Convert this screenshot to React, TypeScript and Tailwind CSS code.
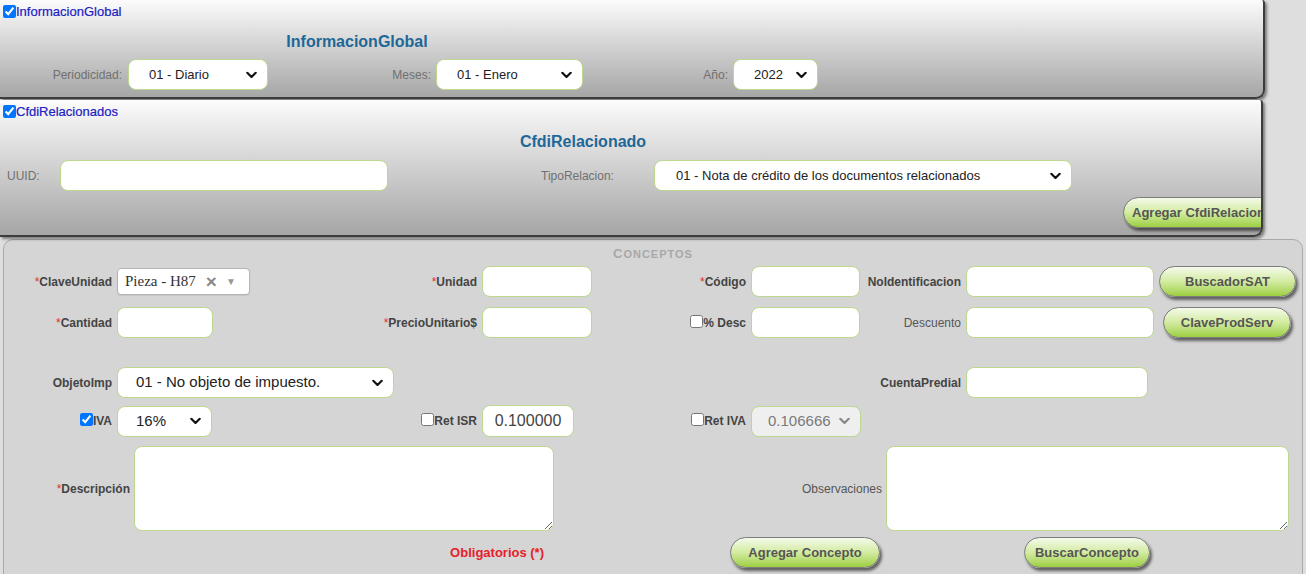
import React from "react";

const LBL = "text-[12px] font-bold text-[#444] whitespace-nowrap";
const INP =
  "h-[31px] rounded-[8px] border border-[#bcd88f] bg-white px-2 text-[15px] text-[#333] outline-none";
const BTN =
  "h-[31px] shrink-0 rounded-full border border-[#7c7c7c] bg-linear-to-b from-[#f4faea] via-[#d3eba0] to-[#9dcf3c] text-[13px] font-bold text-[#555] whitespace-nowrap shadow-[2px_3px_3px_rgba(0,0,0,0.55)]";
const PANEL =
  "relative bg-linear-to-b from-[#fcfcfc] to-[#a6a6a6] border-r-2 border-b-2 border-[#3c3c3c] rounded-br-[9px] rounded-tr-[3px] shadow-[2px_2px_3px_rgba(0,0,0,0.45)]";

function Chevron({ className }: { className?: string }) {
  return (
    <svg width="11" height="7" viewBox="0 0 11 7" className={className}>
      <path
        d="M1.3 1.3 L5.5 5.5 L9.7 1.3"
        fill="none"
        stroke="currentColor"
        strokeWidth="2.2"
        strokeLinecap="round"
        strokeLinejoin="round"
      />
    </svg>
  );
}

function Select({
  w,
  text,
  size = "text-[13px]",
  disabled,
  pad = "pl-[20px]",
}: {
  w: string;
  text: string;
  size?: string;
  disabled?: boolean;
  pad?: string;
}) {
  return (
    <div className={`relative shrink-0 ${w}`}>
      <select
        disabled={disabled}
        defaultValue={text}
        className={`h-[31px] w-full appearance-none rounded-[8px] border border-[#bcd88f] ${pad} ${size} outline-none ${
          disabled ? "bg-[#efefef] text-[#7a7a7a]" : "bg-white text-[#222]"
        }`}
      >
        <option>{text}</option>
      </select>
      <Chevron
        className={`pointer-events-none absolute right-[11px] top-1/2 -translate-y-1/2 ${
          disabled ? "text-[#888]" : "text-[#111]"
        }`}
      />
    </div>
  );
}

function Label({
  w,
  req,
  check,
  checked,
  normal,
  pr = "pr-[5px]",
  children,
}: {
  w: string;
  req?: boolean;
  check?: boolean;
  checked?: boolean;
  normal?: boolean;
  pr?: string;
  children: React.ReactNode;
}) {
  return (
    <div className={`flex shrink-0 items-center justify-end ${w} ${pr}`}>
      {check && (
        <input
          type="checkbox"
          defaultChecked={checked}
          className="m-0 mb-[3px] h-[13px] w-[13px]"
        />
      )}
      <span className={normal ? "text-[12px] text-[#555] whitespace-nowrap" : LBL}>
        {req && <span className="font-normal text-[#e0302a]">*</span>}
        {children}
      </span>
    </div>
  );
}

function Header({ children }: { children: React.ReactNode }) {
  return (
    <div className="flex h-[18px] items-center pl-[3px] pt-[5px]">
      <input type="checkbox" defaultChecked className="m-0 h-[13px] w-[13px]" />
      <span className="text-[13px] leading-none text-[#2020c4] [-webkit-text-stroke:0.2px_#2020c4]">
        {children}
      </span>
    </div>
  );
}

export default function App() {
  return (
    <div className="h-[574px] w-[1306px] overflow-hidden bg-[#dedede] font-['Liberation_Sans',Arial,sans-serif]">
      {/* InformacionGlobal */}
      <section className={`${PANEL} h-[99px] w-[1265px]`}>
        <Header>InformacionGlobal</Header>
        <h2 className="mt-[14px] w-[714px] text-center text-[16px] font-bold leading-[20px] text-[#1d6898]">
          InformacionGlobal
        </h2>
        <div className="mt-[7px] flex h-[31px] items-center">
          <div className="w-[128px] shrink-0 pr-[6px] text-right text-[12px] text-[#707070]">
            Periodicidad:
          </div>
          <Select w="w-[140px]" text="01 - Diario" />
          <div className="w-[168px] shrink-0 pr-[5px] text-right text-[12px] text-[#707070]">
            Meses:
          </div>
          <Select w="w-[147px]" text="01 - Enero" />
          <div className="w-[150px] shrink-0 pr-[5px] text-right text-[12px] text-[#707070]">
            Año:
          </div>
          <Select w="w-[85px]" text="2022" />
        </div>
      </section>

      {/* CfdiRelacionados */}
      <section className={`${PANEL} mt-[1px] h-[137px] w-[1263px] overflow-hidden`}>
        <Header>CfdiRelacionados</Header>
        <h2 className="mt-[14px] w-[1166px] text-center text-[16px] font-bold leading-[20px] text-[#1d6898]">
          CfdiRelacionado
        </h2>
        <div className="mt-[8px] flex h-[31px] items-center">
          <div className="w-[60px] shrink-0 pl-[7px] text-[12px] text-[#707070]">UUID:</div>
          <input className={`${INP} w-[328px]`} />
          <div className="w-[266px] shrink-0 pl-[153px] text-[12px] text-[#707070]">
            TipoRelacion:
          </div>
          <Select
            w="w-[418px]"
            text="01 - Nota de crédito de los documentos relacionados"
            pad="pl-[21px]"
          />
        </div>
        <div className="mt-[6px] flex">
          <button className={`${BTN} ml-[1123px] w-[190px] pl-[8px] text-left`}>
            Agregar CfdiRelacionados
          </button>
        </div>
      </section>

      {/* Conceptos */}
      <section className="ml-[3px] mt-[2px] h-[360px] w-[1300px] rounded-t-[10px] border border-[#a9a9a9] bg-[#d5d5d5]">
        <div className="pt-[7px] text-center text-[13px] font-bold leading-[14px] tracking-[1px] text-[#a8a8a8]">
          <span>C</span>
          <span className="text-[11px]">ONCEPTOS</span>
        </div>

        {/* row 1 */}
        <div className="mt-[5px] flex h-[31px] items-center">
          <Label w="w-[113px]" req>
            ClaveUnidad
          </Label>
          <div className="flex h-[27px] w-[133px] shrink-0 items-center rounded-[4px] border border-[#b4b4b4] bg-white pl-[7px] shadow-[0_1px_1px_rgba(0,0,0,0.08)]">
            <span className="font-['Liberation_Serif',serif] text-[15px] text-[#333]">
              Pieza - H87
            </span>
            <span className="ml-[10px] text-[19px] font-bold leading-none text-[#8a8a8a]">×</span>
            <span className="ml-[9px] text-[10px] leading-none text-[#999]">▼</span>
          </div>
          <Label w="w-[232px]" req>
            Unidad
          </Label>
          <input className={`${INP} w-[110px]`} />
          <Label w="w-[159px]" req>
            Código
          </Label>
          <input className={`${INP} w-[109px]`} />
          <Label w="w-[106px]">NoIdentificacion</Label>
          <input className={`${INP} w-[188px]`} />
          <button className={`${BTN} ml-[5px] w-[137px]`}>BuscadorSAT</button>
        </div>

        {/* row 2 */}
        <div className="mt-[10px] flex h-[31px] items-center">
          <Label w="w-[113px]" req>
            Cantidad
          </Label>
          <input className={`${INP} w-[96px]`} />
          <Label w="w-[269px]" req>
            PrecioUnitario$
          </Label>
          <input className={`${INP} w-[110px]`} />
          <Label w="w-[159px]" check>
            % Desc
          </Label>
          <input className={`${INP} w-[109px]`} />
          <Label w="w-[106px]" normal>
            Descuento
          </Label>
          <input className={`${INP} w-[188px]`} />
          <button className={`${BTN} ml-[9px] w-[128px] text-[#444]`}>ClaveProdServ</button>
        </div>

        {/* row 3 */}
        <div className="mt-[29px] flex h-[31px] items-center">
          <Label w="w-[113px]">ObjetoImp</Label>
          <Select
            w="w-[277px]"
            text="01 - No objeto de impuesto."
            size="text-[15px]"
            pad="pl-[18px]"
          />
          <Label w="w-[572px]">CuentaPredial</Label>
          <input className={`${INP} w-[182px]`} />
        </div>

        {/* row 4 */}
        <div className="mt-[7px] flex h-[32px] items-center">
          <Label w="w-[113px]" check checked>
            IVA
          </Label>
          <Select w="w-[95px]" text="16%" size="text-[15px]" pad="pl-[18px]" />
          <Label w="w-[270px]" check>
            Ret ISR
          </Label>
          <input
            className={`${INP} h-[32px] w-[92px] text-center text-[16px] text-[#444]`}
            defaultValue="0.100000"
          />
          <Label w="w-[177px]" check>
            Ret IVA
          </Label>
          <Select w="w-[110px]" text="0.106666" size="text-[15px]" pad="pl-[16px]" disabled />
        </div>

        {/* row 5 */}
        <div className="mt-[9px] flex h-[85px] items-center">
          <Label w="w-[130px]" req pr="pr-[4px]">
            Descripción
          </Label>
          <textarea className="h-[85px] w-[420px] shrink-0 rounded-[8px] border border-[#bcd88f] bg-white outline-none" />
          <Label w="w-[332px]" normal pr="pr-[4px]">
            Observaciones
          </Label>
          <textarea className="h-[85px] w-[403px] shrink-0 rounded-[8px] border border-[#bcd88f] bg-white outline-none" />
        </div>

        {/* row 6 */}
        <div className="mt-[6px] flex h-[31px] items-center">
          <div className="w-[540px] shrink-0 text-right text-[13px] font-bold text-[#e6202a]">
            Obligatorios (*)
          </div>
          <button className={`${BTN} ml-[186px] w-[150px]`}>Agregar Concepto</button>
          <button className={`${BTN} ml-[144px] w-[126px]`}>BuscarConcepto</button>
        </div>
      </section>
    </div>
  );
}
